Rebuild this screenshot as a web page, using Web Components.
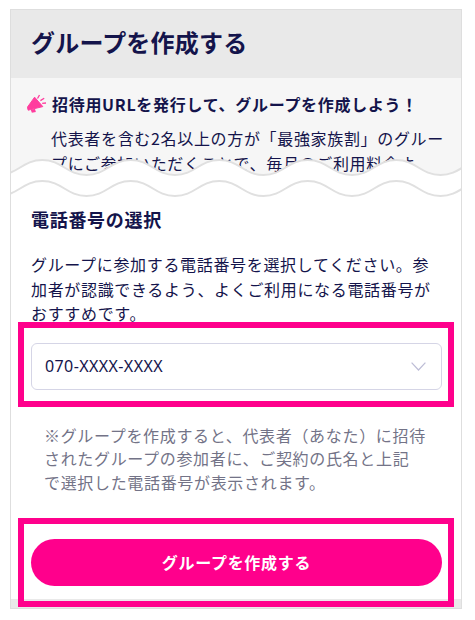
<!DOCTYPE html>
<html lang="ja">
<head>
<meta charset="utf-8">
<style>
html, body { margin: 0; padding: 0; background: #fff; }
body { font-family: "Noto Sans CJK JP", "Noto Sans", sans-serif; color: #14144b; }
</style>
</head>
<body>
<group-card>
    <span slot="title">グループを作成する</span>
    <span slot="lead">招待用URLを発行して、グループを作成しよう！</span>
    <span slot="intro">代表者を含む2名以上の方が「最強家族割」のグループにご参加いただくことで、毎月のご利用料金よ</span>
    <span slot="heading">電話番号の選択</span>
    <span slot="desc">グループに参加する電話番号を選択してください。参加者が認識できるよう、よくご利用になる電話番号がおすすめです。</span>
    <pink-frame top="15" bottom="11"><phone-select value="070-XXXX-XXXX"></phone-select></pink-frame>
    <note-text>※グループを作成すると、代表者（あなた）に招待<br>されたグループの参加者に、ご契約の氏名と上記<br>で選択した電話番号が表示されます。</note-text>
    <pink-frame top="15" bottom="15"><pink-button>グループを作成する</pink-button></pink-frame>
</group-card>
<script>
class PinkFrame extends HTMLElement {
    constructor(){
        super();
        this.attachShadow({ mode : 'open' });
        this.shadowRoot.innerHTML = `
            <style>
                :host{
                    display:block;
                    margin:0 -13px 0 -13px;
                    border:6px solid #ff008c;
                    padding:${this.getAttribute('top')}px 6px ${this.getAttribute('bottom')}px 7px;
                }
            </style>
            <slot></slot>
        `;
    }
}
class PhoneSelect extends HTMLElement {
    constructor(){
        super();
        this.attachShadow({ mode : 'open' });
        this.shadowRoot.innerHTML = `
            <style>
                :host{
                    display:flex;
                    align-items:center;
                    justify-content:space-between;
                    box-sizing:border-box;
                    height:47px;
                    padding:0 15px 0 13px;
                    border:1px solid #d5d5e6;
                    border-radius:6px;
                    background:#fff;
                    font-size:16px;
                    letter-spacing:.4px;
                    font-family:"Noto Sans","Noto Sans CJK JP",sans-serif;
                    color:#14144b;
                }
                svg{ display:block; }
            </style>
            <span>${this.getAttribute('value')}</span>
            <svg width="15" height="9" viewBox="0 0 15 9"><path d="M.6.6 7.5 8 14.4.6" fill="none" stroke="#bdbdd6" stroke-width="1.2"/></svg>
        `;
    }
}
class PinkButton extends HTMLElement {
    constructor(){
        super();
        this.attachShadow({ mode : 'open' });
        this.shadowRoot.innerHTML = `
            <style>
                :host{
                    display:flex;
                    align-items:center;
                    justify-content:center;
                    height:47px;
                    border-radius:24px;
                    background:#ff008c;
                    color:#fff;
                    font-size:16px;
                    font-weight:700;
                    letter-spacing:.7px;
                }
            </style>
            <slot></slot>
        `;
    }
}
class NoteText extends HTMLElement {
    constructor(){
        super();
        this.attachShadow({ mode : 'open' });
        this.shadowRoot.innerHTML = `
            <style>
                :host{
                    display:block;
                    margin:17px 0 23px 0;
                    padding-left:13px;
                    font-size:16px;
                    line-height:23.75px;
                    letter-spacing:.67px;
                    white-space:nowrap;
                    color:#737387;
                }
            </style>
            <slot></slot>
        `;
    }
}
class GroupCard extends HTMLElement {
    constructor(){
        super();
        this.attachShadow({ mode : 'open' });
        this.shadowRoot.innerHTML = `
            <style>
                :host{
                    display:block;
                    position:relative;
                    box-sizing:border-box;
                    width:452px;
                    height:600px;
                    margin:9px 0 0 10px;
                    border:1px solid #dedede;
                    background:#fff;
                }
                header{
                    height:68px;
                    box-sizing:border-box;
                    padding:0 20px 5px 20px;
                    display:flex;
                    align-items:center;
                    background:#e9e9e9;
                    font-size:24px;
                    letter-spacing:.2px;
                    font-weight:700;
                }
                .top{
                    height:112px;
                    box-sizing:border-box;
                    padding:14px 20px 0 20px;
                    background:#f6f6f6;
                    overflow:hidden;
                }
                .lead{
                    display:flex;
                    align-items:center;
                    gap:5px;
                    font-size:16px;
                    font-weight:700;
                    line-height:24px;
                    letter-spacing:.7px;
                    margin-left:-4px;
                }
                .intro{
                    margin:10px -6px 0 20px;
                    font-size:16px;
                    line-height:25px;
                    letter-spacing:.67px;
                }
                .tear{
                    position:absolute;
                    left:0;
                    top:140px;
                    display:block;
                }
                .strip{
                    position:absolute;
                    left:0;
                    right:0;
                    bottom:0;
                    height:9px;
                    background:#e9e9e9;
                }
                .main{
                    position:relative;
                    padding:16px 20px 0 20px;
                }
                h2{
                    margin:0;
                    font-size:18px;
                    line-height:26px;
                    letter-spacing:.7px;
                    font-weight:700;
                }
                .desc{
                    margin:20px 0 -4px 0;
                    font-size:16px;
                    line-height:24.5px;
                    letter-spacing:.67px;
                }
            </style>
            <header><slot name="title"></slot></header>
            <div class="top">
                <div class="lead">
                    <svg width="20" height="20" viewBox="0 0 20 20">
                        <path d="M7.6 3.2 15.8 12.6 3.4 15.6 1.2 16.2 0.4 13.2Z" fill="#ff3d9e" stroke="#ff3d9e" stroke-linejoin="round"/>
                        <path d="M3.6 15.6 8 15l.9 3-4 .8Z" fill="#ff3d9e"/>
                        <path d="M10.5 4.5 12.5 1M13.4 6.6 17.2 4.2M15.2 9.3 19 9" stroke="#ff3d9e" stroke-width="1.3" fill="none"/>
                    </svg>
                    <span><slot name="lead"></slot></span>
                </div>
                <p class="intro"><slot name="intro"></slot></p>
            </div>
            ${this.tearSvg()}
            <div class="strip"></div>
            <div class="main">
                <h2><slot name="heading"></slot></h2>
                <p class="desc"><slot name="desc"></slot></p>
                <slot></slot>
            </div>
        `;
    }

    //Onda entre las dos partes de la tarjeta
    wave(y){
        const half = 44.25;
        let d = `M-13 ${y + 15}`;
        for(let i = 0, x = -13; x < 450; i++, x += half){
            const to = i % 2 ? y + 15 : y;
            d += ` C${x + half * .45} ${i % 2 ? y : y + 15} ${x + half * .55} ${to} ${x + half} ${to}`;
        }
        return d;
    }

    tearSvg(){
        const line = `fill="none" stroke="#e0e0e0" stroke-width="2"`;
        return `
            <svg class="tear" width="450" height="50" viewBox="0 0 450 50">
                <path fill="#fff" d="${this.wave(10)} V50 H-13Z"/>
                <path ${line} d="${this.wave(10)}"/>
                <path ${line} d="${this.wave(31)}"/>
            </svg>
        `;
    }
}
customElements.define('pink-frame', PinkFrame);
customElements.define('phone-select', PhoneSelect);
customElements.define('pink-button', PinkButton);
customElements.define('note-text', NoteText);
customElements.define('group-card', GroupCard);
</script>
</body>
</html>
